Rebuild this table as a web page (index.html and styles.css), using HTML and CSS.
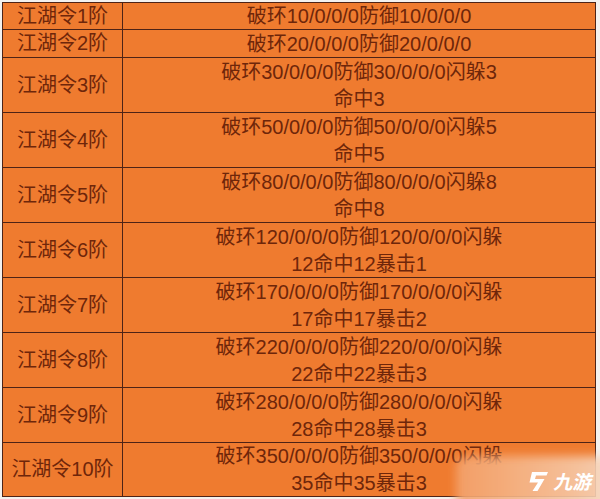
FILE: index.html
```html
<!DOCTYPE html>
<html lang="zh">
<head>
<meta charset="utf-8">
<link rel="stylesheet" href="styles.css">
</head>
<body>
<div class="page">
  <div class="table">
    <div class="cell name r1">江湖令1阶</div><div class="cell val r1">破环10/0/0/0防御10/0/0/0</div>
    <div class="cell name">江湖令2阶</div><div class="cell val">破环20/0/0/0防御20/0/0/0</div>
    <div class="cell name">江湖令3阶</div><div class="cell val">破环30/0/0/0防御30/0/0/0闪躲3<br>命中3</div>
    <div class="cell name">江湖令4阶</div><div class="cell val">破环50/0/0/0防御50/0/0/0闪躲5<br>命中5</div>
    <div class="cell name">江湖令5阶</div><div class="cell val">破环80/0/0/0防御80/0/0/0闪躲8<br>命中8</div>
    <div class="cell name">江湖令6阶</div><div class="cell val">破环120/0/0/0防御120/0/0/0闪躲<br>12命中12暴击1</div>
    <div class="cell name">江湖令7阶</div><div class="cell val">破环170/0/0/0防御170/0/0/0闪躲<br>17命中17暴击2</div>
    <div class="cell name">江湖令8阶</div><div class="cell val">破环220/0/0/0防御220/0/0/0闪躲<br>22命中22暴击3</div>
    <div class="cell name">江湖令9阶</div><div class="cell val">破环280/0/0/0防御280/0/0/0闪躲<br>28命中28暴击3</div>
    <div class="cell name">江湖令10阶</div><div class="cell val">破环350/0/0/0防御350/0/0/0闪躲<br>35命中35暴击3</div>
  </div>
  <div class="glow"></div>
  <div class="logo">
    <svg class="logo-icon" width="22" height="19" viewBox="0 0 22 19">
      <path d="M5 0 H21 L19.5 3.5 H9 L8 7 H17.5 L10.5 19 H5.5 L11 10.5 H2.5 Z" fill="#fff"/>
    </svg>
    <span class="logo-text">九游</span>
  </div>
</div>
</body>
</html>
```

FILE: styles.css
```css
html, body {
  margin: 0;
  padding: 0;
  background: #f4f1ee;
}

.page {
  position: relative;
  width: 600px;
  height: 499px;
  padding: 2px 0 0 2px;
  box-sizing: border-box;
  overflow: hidden;
}

.table {
  width: 594px;
  display: grid;
  grid-template-columns: 119px 472px;
  grid-template-rows: 26px 27px 54px 54px 54px 54px 54px 54px 54px 53px;
  gap: 1px;
  padding: 1px;
  box-sizing: border-box;
  background: #4e2316;
  font-family: "Liberation Sans", "Noto Sans CJK SC", sans-serif;
  font-size: 20px;
  line-height: 27px;
  color: #6e260a;
}

.cell {
  background: #ef7b2f;
  display: flex;
  align-items: center;
  justify-content: center;
  text-align: center;
}

.val {
  padding-top: 1px;
}

.glow {
  position: absolute;
  z-index: 2;
  left: 456px;
  top: 456px;
  width: 160px;
  height: 60px;
  background: linear-gradient(to right, #f3a26c, #f5b486 35%, #f6c8a6 75%, #f7dac4);
  opacity: 0.9;
  border-radius: 10px;
  filter: blur(5px);
}

.logo {
  position: absolute;
  z-index: 3;
  left: 527px;
  top: 471px;
  display: flex;
  align-items: center;
  gap: 6px;
}

.logo-icon {
  display: block;
}

.logo-text {
  font-family: "Noto Sans CJK SC", sans-serif;
  font-size: 19px;
  line-height: 20px;
  font-weight: 700;
  color: #fff;
  transform: skewX(-12deg);
  display: inline-block;
}
```
